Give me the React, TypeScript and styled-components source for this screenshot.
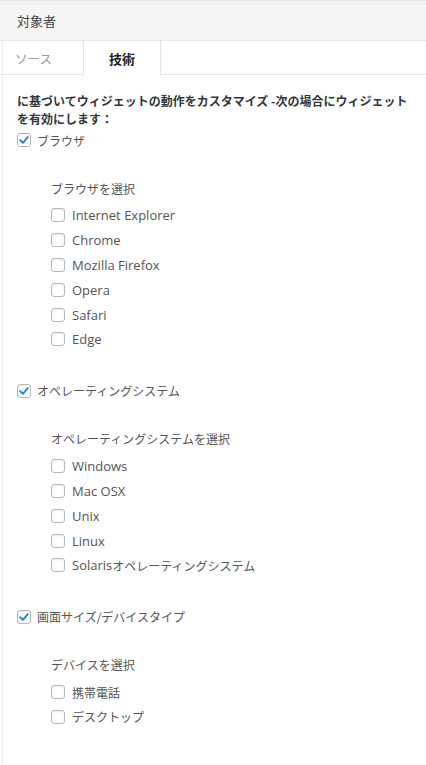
import React from "react";
import styled, { createGlobalStyle } from "styled-components";

const Global = createGlobalStyle`
  html, body { margin: 0; padding: 0; background: #fff; }
  body { font-family: "Open Sans", "Noto Sans CJK JP", sans-serif; color: #555; }
  * { box-sizing: border-box; }
`;

const Panel = styled.div`
  width: 426px;
  min-height: 765px;
  margin-left: 2px;
  border-left: 1px solid #ececec;
  background: #fff;
`;

const Header = styled.div`
  height: 41px;
  margin-left: -3px;
  padding-left: 17px;
  border-top: 1px solid #e6e6e6;
  border-bottom: 1px solid #e6e6e6;
  background: #f5f5f5;
  display: flex;
  align-items: center;
  font-size: 13px;
  color: #444;
  font-family: "Noto Sans CJK JP", sans-serif;
`;

const Tabs = styled.div`
  display: flex;
  height: 34px;
  border-bottom: 1px solid #e6e6e6;
  margin-left: -3px;
`;

const Tab = styled.div<{ $active?: boolean }>`
  height: 34px;
  display: flex;
  align-items: center;
  font-family: "Noto Sans CJK JP", sans-serif;
  font-size: ${(p) => (p.$active ? "13px" : "12.5px")};
  font-weight: ${(p) => (p.$active ? 700 : 400)};
  color: ${(p) => (p.$active ? "#1d2125" : "#9a9a9a")};
  ${(p) =>
    p.$active
      ? `width: 78px; justify-content: center; background: #fff;
         border-left: 1px solid #e6e6e6; border-right: 1px solid #e6e6e6;
         margin-bottom: -1px; height: 35px; padding-bottom: 1px;`
      : `width: 83px; padding-left: 15px;`}
`;

const Content = styled.div`
  padding: 17px 0 0 14px;
`;

const Intro = styled.div`
  font-family: "Noto Sans CJK JP", sans-serif;
  font-size: 12px;
  font-weight: 700;
  line-height: 18px;
  color: #32373c;
  white-space: nowrap;
  margin-bottom: 2px;
`;

const Group = styled.div`
  margin-bottom: 29px;
`;

const GroupRow = styled.label`
  height: 20px;
  display: flex;
  align-items: center;
  font-family: "Noto Sans CJK JP", sans-serif;
  font-size: 12px;
  color: #555;
`;

const Sub = styled.div`
  margin-top: 28px;
  padding-left: 34px;
`;

const SubLabel = styled.div`
  height: 20px;
  margin-bottom: 5px;
  display: flex;
  align-items: center;
  font-family: "Noto Sans CJK JP", sans-serif;
  font-size: 12px;
  color: #555;
`;

const Item = styled.label`
  height: 24.8px;
  display: flex;
  align-items: center;
  font-size: 13px;
  color: #555;
`;

const Jp = styled.span`
  font-family: "Noto Sans CJK JP", sans-serif;
  font-size: 12px;
`;

const Box = styled.span<{ $gap: number }>`
  width: 14px;
  height: 14px;
  flex: none;
  margin-right: ${(p) => p.$gap}px;
  border: 1px solid #b4b9be;
  border-radius: 3px;
  background: #fff;
  box-shadow: inset 0 1px 2px rgba(0, 0, 0, 0.08);
  display: flex;
  align-items: center;
  justify-content: center;
`;

const Check = ({ checked, gap }: { checked?: boolean; gap: number }) => (
  <Box $gap={gap}>
    {checked && (
      <svg width="12" height="12" viewBox="0 0 12 12">
        <path d="M2.2 6.2 L4.9 8.8 L9.8 3.2" fill="none" stroke="#1e8cbe" strokeWidth="2" strokeLinecap="round" strokeLinejoin="round" />
      </svg>
    )}
  </Box>
);

type GroupData = { title: string; sub: string; items: React.ReactNode[] };

const groups: GroupData[] = [
  {
    title: "ブラウザ",
    sub: "ブラウザを選択",
    items: ["Internet Explorer", "Chrome", "Mozilla Firefox", "Opera", "Safari", "Edge"],
  },
  {
    title: "オペレーティングシステム",
    sub: "オペレーティングシステムを選択",
    items: [
      "Windows",
      "Mac OSX",
      "Unix",
      "Linux",
      <>
        Solaris<Jp>オペレーティングシステム</Jp>
      </>,
    ],
  },
  {
    title: "画面サイズ/デバイスタイプ",
    sub: "デバイスを選択",
    items: [<Jp>携帯電話</Jp>, <Jp>デスクトップ</Jp>],
  },
];

export default function App() {
  return (
    <>
      <Global />
      <Panel>
        <Header>対象者</Header>
        <Tabs>
          <Tab>ソース</Tab>
          <Tab $active>技術</Tab>
        </Tabs>
        <Content>
          <Intro>
            に基づいてウィジェットの動作をカスタマイズ -次の場合にウィジェット
            <br />
            を有効にします：
          </Intro>
          {groups.map((g, i) => (
            <Group key={i}>
              <GroupRow>
                <Check checked gap={6} />
                {g.title}
              </GroupRow>
              <Sub>
                <SubLabel>{g.sub}</SubLabel>
                {g.items.map((it, j) => (
                  <Item key={j}>
                    <Check gap={7} />
                    {it}
                  </Item>
                ))}
              </Sub>
            </Group>
          ))}
        </Content>
      </Panel>
    </>
  );
}
